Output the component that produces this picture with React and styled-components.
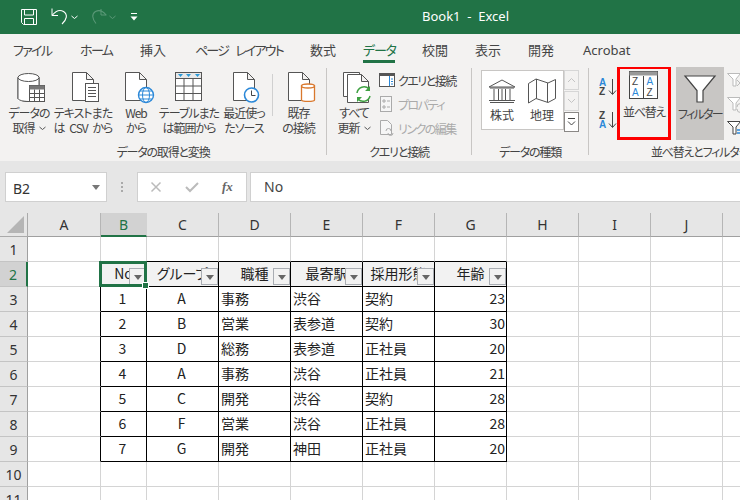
import React from 'react';
import styled, { createGlobalStyle } from 'styled-components';

const UI = '"Noto Sans CJK JP", "Noto Sans", sans-serif';
const LATIN = '"Noto Sans", "Noto Sans CJK JP", sans-serif';

const Global = createGlobalStyle`
  html, body { margin: 0; padding: 0; background: #fff; }
  body { width: 740px; height: 500px; overflow: hidden; font-family: ${UI}; }
  * { box-sizing: border-box; }
`;
const Page = styled.div`width:740px;height:500px;overflow:hidden;display:flex;flex-direction:column;`;

/* title bar */
const TitleBar = styled.header`height:34px;flex:none;background:#217346;color:#fff;display:flex;align-items:center;position:relative;padding-left:20px;`;
const Quick = styled.div`display:flex;align-items:center;`;
const QuickGap = styled.span`flex:none;width:${p=>p.$w}px;`;
const Title = styled.div`position:absolute;left:422px;top:6px;font:13px/20px ${LATIN};white-space:pre;`;

/* tabs */
const Tabs = styled.nav`height:33px;flex:none;background:#f3f2f1;display:flex;gap:27px;padding:0 0 0 13px;`;
const Tab = styled.div`width:${p=>p.$w}px;font-size:13px;line-height:16px;height:29px;padding-top:8px;color:${p=>p.$on?'#217346':'#444'};
  font-feature-settings:"palt";letter-spacing:${p=>p.$ls||0}px;word-spacing:${p=>p.$ws||0}px;white-space:nowrap;border-bottom:${p=>p.$on?'3px solid #217346':'none'};
  font-family:${p=>p.$latin?LATIN:UI};`;

/* ribbon */
const Ribbon = styled.section`height:94px;flex:none;background:#f3f2f1;display:flex;overflow:hidden;`;
const Group = styled.div`flex:none;width:${p=>p.$w}px;display:flex;flex-direction:column;position:relative;`;
const GroupBody = styled.div`height:76px;display:flex;padding-left:${p=>p.$pl||0}px;`;
const GroupLabel = styled.div`height:18px;text-align:center;font-size:12px;line-height:18px;color:#444;font-feature-settings:"palt";letter-spacing:-1.2px;white-space:nowrap;`;
const GroupRule = styled.div`flex:none;width:1px;height:87px;margin-top:1px;background:#c8c6c4;`;
const Big = styled.div`flex:none;width:${p=>p.$w}px;display:flex;flex-direction:column;align-items:center;padding-top:4px;`;
const BigLabel = styled.div`font-size:12px;line-height:15px;text-align:center;color:#444;font-feature-settings:"palt";letter-spacing:-1px;word-spacing:3px;white-space:nowrap;margin-top:2px;`;
const Chev = styled.span`display:inline-block;margin-left:4px;vertical-align:2px;`;
const VRule = styled.div`flex:none;width:1px;height:42px;margin-top:7px;background:#d0d0d0;`;
const SmallStack = styled.div`flex:none;display:flex;flex-direction:column;gap:4px;padding-top:3px;margin-left:3px;`;
const SmallRow = styled.div`height:20px;display:flex;align-items:center;gap:2px;font-size:12px;letter-spacing:-1.5px;color:${p=>p.$off?'#aaa':'#444'};font-feature-settings:"palt";white-space:nowrap;`;
const Gallery = styled.div`flex:none;width:83px;height:60px;margin-top:3px;background:#fff;border:1px solid #c8c6c4;display:flex;`;
const GalleryItem = styled.div`width:40px;display:flex;flex-direction:column;align-items:center;padding-top:7px;font-size:12px;line-height:15px;color:#444;gap:3px;`;
const Scroll = styled.div`flex:none;width:15px;margin-top:3px;display:flex;flex-direction:column;gap:1px;`;
const ScrollBtn = styled.div`height:20px;border:1px solid ${p=>p.$on?'#8a8886':'#d6d6d6'};background:${p=>p.$on?'#fff':'#f3f2f1'};display:flex;align-items:center;justify-content:center;`;
const SortStack = styled.div`flex:none;width:28px;display:flex;flex-direction:column;align-items:flex-end;gap:13px;padding:11px 0 0 0;`;
const SortBtn = styled.div`flex:none;width:54px;height:74px;margin-top:-1px;border:3px solid #fe0000;display:flex;flex-direction:column;align-items:center;`;
const FilterBtn = styled.div`flex:none;width:48px;height:73px;margin:0 0 0 5px;background:#c8c6c4;display:flex;flex-direction:column;align-items:center;padding-top:4px;`;
const SortLabel = styled(BigLabel)`margin-top:4px;letter-spacing:-1.3px;`;
const FilterLabel = styled(BigLabel)`letter-spacing:-1.7px;`;
const FunnelStack = styled.div`flex:none;display:flex;flex-direction:column;gap:8px;margin:5px 0 0 3px;`;

/* formula bar */
const FormulaBar = styled.section`height:52px;flex:none;background:#e6e6e6;display:flex;padding:11px 0 0 5px;`;
const NameBox = styled.div`width:102px;height:30px;background:#fff;border:1px solid #d0d0d0;font:14px/32px ${LATIN};color:#333;padding-left:7px;position:relative;`;
const NameArrow = styled.span`position:absolute;right:6px;top:12px;border:4px solid transparent;border-top:5px solid #777;border-bottom:0;`;
const Grip = styled.div`width:30px;display:flex;flex-direction:column;align-items:center;gap:2px;padding-top:10px;`;
const GripDot = styled.i`width:2px;height:2px;background:#aaa;display:block;`;
const FxBox = styled.div`width:110px;height:30px;background:#fff;border:1px solid #d0d0d0;display:flex;align-items:center;gap:23px;padding-left:12px;`;
const Fx = styled.span`font:italic bold 13px "Liberation Serif",serif;color:#666;`;
const Input = styled.div`flex:1;height:30px;margin-left:3px;background:#fff;border:1px solid #d0d0d0;border-right:0;font:14px/28px ${LATIN};color:#444;padding-left:13px;`;

/* sheet */
const Sheet = styled.div`flex:1;display:grid;grid-template-columns:28px 73px 46px repeat(9,72px);grid-template-rows:24px repeat(11,25px);background:#fff;overflow:hidden;`;
const Corner = styled.div`background:#e6e6e6;border-right:1px solid #aaa;border-bottom:1px solid #aaa;position:relative;`;
const Tri = styled.div`position:absolute;right:3px;bottom:3px;border-style:solid;border-width:0 0 17px 17px;border-color:transparent transparent #b5b5b5 transparent;`;
const ColHead = styled.div`background:${p=>p.$on?'#d2d2d2':'#e6e6e6'};border-right:1px solid ${p=>p.$on?'#d2d2d2':'#b5b5b5'};
  border-bottom:${p=>p.$on?'2px solid #217346':'1px solid #a0a0a0'};font:14px/24px ${LATIN};text-align:center;color:${p=>p.$on?'#217346':'#333'};`;
const RowHead = styled.div`background:${p=>p.$on?'#d2d2d2':'#e6e6e6'};border-right:${p=>p.$on?'2px solid #217346':'1px solid #a0a0a0'};
  border-bottom:1px solid #c4c4c4;font:14px/25px ${LATIN};text-align:center;color:${p=>p.$on?'#217346':'#333'};`;
const Cell = styled.div`position:relative;border-right:1px solid ${p=>p.$r?'#000':'#d4d4d4'};border-bottom:1px solid ${p=>p.$b?'#000':'#d4d4d4'};
  background:${p=>p.$head?'#f2f2f2':'#fff'};font-size:14px;line-height:23px;color:#222;white-space:nowrap;overflow:${p=>p.$sel?'visible':'hidden'};
  text-align:${p=>p.$align||'left'};padding:0 ${p=>p.$align==='right'?1:2}px 0 ${p=>p.$align==='left'?2:0}px;font-feature-settings:"palt";
  ${p=>p.$head?'display:flex;justify-content:center;padding:0;':''}`;
const Selected = styled.div`position:absolute;inset:-1px -1px -1px -2px;border:3px solid #217346;pointer-events:none;z-index:2;`;
const Handle = styled.div`position:absolute;right:-5px;bottom:-5px;width:7px;height:7px;background:#217346;border:1px solid #fff;z-index:3;`;
const FilterArrow = styled.div`position:absolute;right:0;top:6px;width:17px;height:17px;background:#f2f2f2;border:1px solid #a9adb3;display:flex;align-items:center;justify-content:center;z-index:1;`;
const FilterTri = styled.i`display:block;margin-top:2px;border:4px solid transparent;border-top:5px solid #666;border-bottom:0;`;

const S = ({w=32,h=32,children,...r}) => <svg width={w} height={h} viewBox={`0 0 ${w} ${h}`} fill="none" style={{display:'block',flex:'none',overflow:'visible'}} {...r}>{children}</svg>;
const DK='#555';
const Doc = () => <path d="M4.5 1.5h14l7 7v21h-21z M18.500 1.500v7h7" stroke={DK} fill="#fff"/>;

const IconDb = () => <S w={30} h={32}>
  <path d="M4 6.500v21c0 1.500 6 3 11 3V6.500" stroke={DK} fill="#fff"/><path d="M25 6.500V14" stroke={DK}/><path d="M4 6.500h21V15H15v15H4z" fill="#fff"/><path d="M4 6.500v21c0 1.500 5 3 11 3M25 6.500v8" stroke={DK}/><ellipse cx="14.500" cy="6.500" rx="10.500" ry="4" stroke={DK} fill="#fff"/>
  <rect x="15.500" y="14.500" width="15" height="16" fill="#fff" stroke={DK}/><path d="M15.500 14.500h15v4h-15z" fill="#777"/>
  <path d="M15.500 22.500h15M15.500 26.500h15M20.500 18.500v12M25.500 18.500v12" stroke={DK}/></S>;
const IconText = () => <S w={30} h={32}><Doc/><rect x="17.500" y="12.500" width="13" height="18" fill="#fff" stroke={DK}/><path d="M20 16.500h8M20 19.500h8M20 22.500h8M20 25.500h8" stroke={DK}/></S>;
const IconWeb = () => <S w={30} h={32}><Doc/><circle cx="25" cy="24" r="7.500" fill="#fff" stroke="#2b88d8" strokeWidth="1.400"/>
  <ellipse cx="25" cy="24" rx="3.500" ry="7.500" stroke="#2b88d8"/><path d="M17.500 24h15M19 20h12M19 28h12" stroke="#2b88d8"/></S>;
const IconTable = () => <S w={30} h={32}><rect x="1.500" y="1.500" width="26" height="28" fill="#fff" stroke={DK}/><path d="M2 2h25v5H2z" fill="#e8e8e8"/>
  <path d="M1.500 7.500h26M1.500 15h26M1.500 22.500h26M10 7.500v22M19 7.500v22" stroke={DK}/><path d="M4 3h5l-2.500 3zM12 3h5l-2.500 3zM21 3h5l-2.500 3z" fill="#2b9ad8"/></S>;
const IconRecent = () => <S w={30} h={32}><Doc/><circle cx="22.500" cy="24" r="7" fill="#fff" stroke="#2b88d8" strokeWidth="1.600"/><path d="M22.500 19.500v5h4" stroke="#444"/></S>;
const IconExist = () => <S w={30} h={32}><Doc/><path d="M17.500 15v14c0 1.800 13 1.800 13 0V15z" fill="#fff" stroke="#d9782d" strokeWidth="1.300"/><ellipse cx="24" cy="15" rx="6.500" ry="2" fill="#fff" stroke="#d9782d" strokeWidth="1.300"/></S>;
const IconRefresh = () => <S w={32} h={32}><g transform="translate(4 0)"><path d="M1.500 1.500h16v24h-16z" stroke={DK} fill="#fff"/><g transform="translate(1 2)"><Doc/></g>
  <circle cx="21" cy="23" r="7" fill="#fff"/>
  <path d="M15 22a7 7 0 0 1 12-4" stroke="#3fa142" strokeWidth="1.500"/><path d="M28 25a7 7 0 0 1-12 3" stroke="#3fa142" strokeWidth="1.500"/><path d="M28 15v5h-5zM15 31v-5h5z" fill="#3fa142"/></g></S>;
const IconQuery = () => <S w={17} h={15}><rect x=".5" y=".5" width="15" height="13" fill="#fff" stroke={DK}/><path d="M1 1h15v2H1z" fill="#555"/><path d="M10.500 3v10" stroke="#2b88d8"/><path d="M12 6h2M12 8.500h2M12 11h2" stroke="#2b88d8"/></S>;
const IconProp = () => <S w={17} h={16}><rect x="1.500" y=".5" width="11" height="15" fill="#f6f6f6" stroke="#aaa"/><path d="M4 4h2v2H4zM4 10h2v2H4zM8 5h3M8 11h3" stroke="#aaa"/></S>;
const IconLink = () => <S w={17} h={16}><path d="M1.500.5h7l4 4v10h-11z" fill="#f6f6f6" stroke="#aaa"/><path d="M7 11a2.500 2.500 0 0 1 5 0M9 13a2.500 2.500 0 0 0 5 0" stroke="#aaa"/></S>;
const IconStock = () => <S w={30} h={26}><path d="M2 9 15 2l13 7z" fill="#fff" stroke={DK}/><path d="M3 10h24M3 24.500h24M2 22.500h26M7 11v11M11.500 11v11M18.500 11v11M23 11v11M15 11v11" stroke={DK}/></S>;
const IconMap = () => <S w={30} h={26}><path d="M1.500 5.500 9 1l12 4 7.500-3.500v19L21 24.500 9 20.500 1.500 25z M9.500 1v19.500 M20.500 5v19" fill="#fff" stroke={DK}/></S>;
const ChevUp = () => <S w={9} h={6}><path d="M1 5 4.500 1.500 8 5" stroke="#c4c4c4"/></S>;
const ChevDown = () => <S w={9} h={6}><path d="M1 1 4.500 4.500 8 1" stroke="#c4c4c4"/></S>;
const ChevMore = () => <S w={9} h={8}><path d="M1 .5h7" stroke="#444"/><path d="M1 3.500 4.500 7 8 3.500" stroke="#444"/></S>;
const Mini = () => <S w={7} h={5}><path d="M.5 1l3 2.500 3-2.500" stroke="#555"/></S>;

const Sx = ({top,bot,tc,bc}) => <>
  <text x="0" y="8" fontFamily="Liberation Sans" fontSize="10" fontWeight="bold" fill={tc}>{top}</text>
  <text x="0" y="17" fontFamily="Liberation Sans" fontSize="10" fontWeight="bold" fill={bc}>{bot}</text></>;
const IconAZ = ({rev}) => <S w={18} h={20}>
  {rev ? <Sx top="Z" bot="A" tc="#444" bc="#2b88d8"/> : <Sx top="A" bot="Z" tc="#2b88d8" bc="#444"/>}
  <path d="M13.500 1v15M10 12.500l3.500 4 3.500-4" stroke="#444"/></S>;
const IconSort = () => <S w={30} h={29} style={{display:'block',marginTop:2,overflow:'visible'}}>
  <rect x=".5" y=".5" width="28" height="27" fill="#fff" stroke="#444"/><path d="M.5.5h28v4H.5z" fill="#999"/><path d="M14.500 5v23" stroke="#444"/>
  <text x="3" y="14" fontFamily="Liberation Sans" fontSize="10" fill="#444">Z</text><text x="3" y="25" fontFamily="Liberation Sans" fontSize="10" fill="#2b88d8">A</text>
  <text x="17.500" y="14" fontFamily="Liberation Sans" fontSize="10" fill="#2b88d8">A</text><text x="17.500" y="25" fontFamily="Liberation Sans" fontSize="10" fill="#444">Z</text></S>;
const IconFunnel = () => <S w={36} h={33}><path d="M3 5h30L21 19.500V31h-6V19.500z" fill="#fff" stroke="#444" strokeWidth="1.200"/></S>;
const IconFunnelSm = ({off,kind}) => <S w={18} h={16}><path d="M.5 1.500h13L9 7v7H6V7z" fill="#fff" stroke={off?'#bbb':'#444'}/>
  {kind===1 && <path d="M10 8l6 6M16 8l-6 6" stroke="#bbb"/>}
  {kind===2 && <path d="M10 11a3.500 3.500 0 0 1 7 0M17 13a3.500 3.500 0 0 1-7 0" stroke="#bbb"/>}
  {kind===3 && <path d="M10 10h7M10 13h7" stroke="#2b88d8" strokeWidth="1.500"/>}</S>;

const IconSave = () => <S w={18} h={18}><path d="M1.500 1.500h15v15h-13l-2-2z" stroke="#fff"/><path d="M4.500 2v5h9V2M4.500 16v-5.500h9V16" stroke="#fff"/></S>;
const IconUndo = () => <S w={20} h={18}><path d="M2 .5v7h6" stroke="#fff"/><path d="M2 7.500C6 2.500 10 1.500 13.500 3.500c4.500 3 3.500 8-1.500 12.500" stroke="#fff" strokeWidth="1.100"/></S>;
const IconRedo = () => <S w={20} h={18}><path d="M13 1v6h5.500" stroke="#5a9877"/><path d="M18 7C14.500 2.500 10.500 2 7.500 3.500c-4 2.500-3.500 7 .5 12" stroke="#5a9877" strokeWidth="1.100"/></S>;
const Caret = ({c='#fff'}) => <S w={7} h={5}><path d="M.5 1l3 2.500 3-2.500" stroke={c}/></S>;
const IconQat = () => <S w={8} h={8}><path d="M1 .5h6" stroke="#fff"/><path d="M.5 3.500h7L4 7.500z" fill="#fff"/></S>;
const IconX = () => <S w={12} h={12}><path d="M1.500 1.500l9 9M10.500 1.500l-9 9" stroke="#bbb" strokeWidth="1.500"/></S>;
const IconCheck = () => <S w={14} h={12}><path d="M1 6l4 4 8-8" stroke="#bbb" strokeWidth="2"/></S>;

const cols=['A','B','C','D','E','F','G','H','I','J','K'];
const head=['No','グループ','職種','最寄駅','採用形態','年齢'];
const rows=[[1,'A','事務','渋谷','契約',23],[2,'B','営業','表参道','契約',30],[3,'D','総務','表参道','正社員',20],[4,'A','事務','渋谷','正社員',21],[5,'C','開発','渋谷','契約',28],[6,'F','営業','渋谷','正社員',28],[7,'G','開発','神田','正社員',20]];
const align=['center','center','left','left','left','right'];

function Grid(){
  const out=[<Corner key="c"><Tri/></Corner>];
  cols.forEach(c=>out.push(<ColHead key={c} $on={c==='B'}>{c}</ColHead>));
  for(let r=1;r<=11;r++){
    out.push(<RowHead key={'r'+r} $on={r===2}>{r}</RowHead>);
    cols.forEach((c,i)=>{
      const k=c+r; const t=i-1;
      const inRow=r>=2&&r<=9;
      const inCol=t>=0&&t<=5;
      const right=inRow&&i>=0&&i<=6;
      const bottom=inCol&&r>=1&&r<=9;
      if(r===2&&inCol){
        out.push(<Cell key={k} $r={right} $b={bottom} $head $sel={t===0}>
          <span>{head[t]}</span>
          <FilterArrow><FilterTri/></FilterArrow>
          {t===0 && <Selected><Handle/></Selected>}
        </Cell>);
      } else if(r>=3&&r<=9&&inCol){
        out.push(<Cell key={k} $r={right} $b={bottom} $align={align[t]}>{rows[r-3][t]}</Cell>);
      } else {
        out.push(<Cell key={k} $r={right} $b={bottom}/>);
      }
    });
  }
  return <Sheet>{out}</Sheet>;
}

export default function App(){
  return <Page><Global/>
    <TitleBar>
      <Quick>
        <IconSave/>
        <QuickGap $w={12}/>
        <IconUndo/><QuickGap $w={1}/><Caret/>
        <QuickGap $w={10}/>
        <IconRedo/><QuickGap $w={1}/><Caret c="#5a9877"/>
        <QuickGap $w={14}/>
        <IconQat/>
      </Quick>
      <Title>Book1  -  Excel</Title>
    </TitleBar>
    <Tabs>
      <Tab $w={40} $ls={-1.7}>ファイル</Tab><Tab $w={33} $ls={-1.6}>ホーム</Tab><Tab $w={28}>挿入</Tab><Tab $w={88} $ls={-1.8} $ws={6}>ページ レイアウト</Tab><Tab $w={26}>数式</Tab><Tab $on $w={32} $ls={-1.2}>データ</Tab><Tab $w={26}>校閲</Tab><Tab $w={26}>表示</Tab><Tab $w={28}>開発</Tab><Tab $latin $w={60}>Acrobat</Tab>
    </Tabs>
    <Ribbon>
      <Group $w={326}>
        <GroupBody $pl={2}>
          <Big $w={54}><IconDb/><BigLabel>データの<br/>取得<Chev><Mini/></Chev></BigLabel></Big>
          <Big $w={54}><IconText/><BigLabel>テキストまた<br/>は CSV から</BigLabel></Big>
          <Big $w={52}><IconWeb/><BigLabel>Web<br/>から</BigLabel></Big>
          <Big $w={54}><IconTable/><BigLabel>テーブルまた<br/>は範囲から</BigLabel></Big>
          <Big $w={56}><IconRecent/><BigLabel>最近使っ<br/>たソース</BigLabel></Big>
          <VRule/>
          <Big $w={51}><IconExist/><BigLabel>既存<br/>の接続</BigLabel></Big>
        </GroupBody>
        <GroupLabel>データの取得と変換</GroupLabel>
      </Group>
      <GroupRule/>
      <Group $w={144}>
        <GroupBody $pl={5}>
          <Big $w={44}><IconRefresh/><BigLabel>すべて<br/>更新<Chev><Mini/></Chev></BigLabel></Big>
          <SmallStack>
            <SmallRow><IconQuery/>クエリと接続</SmallRow>
            <SmallRow $off><IconProp/>プロパティ</SmallRow>
            <SmallRow $off><IconLink/>リンクの編集</SmallRow>
          </SmallStack>
        </GroupBody>
        <GroupLabel>クエリと接続</GroupLabel>
      </Group>
      <GroupRule/>
      <Group $w={116}>
        <GroupBody $pl={9}>
          <Gallery>
            <GalleryItem><IconStock/>株式</GalleryItem>
            <GalleryItem><IconMap/>地理</GalleryItem>
          </Gallery>
          <Scroll>
            <ScrollBtn><ChevUp/></ScrollBtn>
            <ScrollBtn><ChevDown/></ScrollBtn>
            <ScrollBtn $on><ChevMore/></ScrollBtn>
          </Scroll>
        </GroupBody>
        <GroupLabel>データの種類</GroupLabel>
      </Group>
      <GroupRule/>
      <Group $w={222}>
        <GroupBody>
          <SortStack><IconAZ/><IconAZ rev/></SortStack>
          <SortBtn><IconSort/><SortLabel>並べ替え</SortLabel></SortBtn>
          <FilterBtn><IconFunnel/><FilterLabel>フィルター</FilterLabel></FilterBtn>
          <FunnelStack><IconFunnelSm off kind={1}/><IconFunnelSm off kind={2}/><IconFunnelSm kind={3}/></FunnelStack>
        </GroupBody>
        <GroupLabel>並べ替えとフィルター</GroupLabel>
      </Group>
    </Ribbon>
    <FormulaBar>
      <NameBox>B2<NameArrow/></NameBox>
      <Grip><GripDot/><GripDot/><GripDot/></Grip>
      <FxBox><IconX/><IconCheck/><Fx>fx</Fx></FxBox>
      <Input>No</Input>
    </FormulaBar>
    <Grid/>
  </Page>;
}
